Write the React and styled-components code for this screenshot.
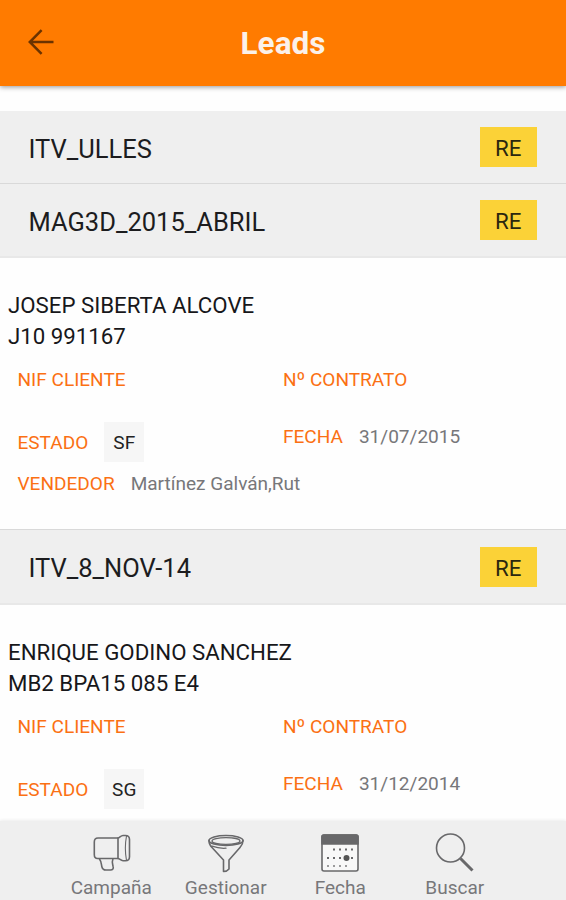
import React from "react";
import styled, { createGlobalStyle } from "styled-components";

const GlobalStyle = createGlobalStyle`
  *, *::before, *::after { box-sizing: border-box; }
  html, body { margin: 0; padding: 0; background: #fff; overflow: hidden; }
  body { font-family: Roboto, "Noto Sans", sans-serif; color: #1c1c1e; }
`;

const Screen = styled.div`
  width: 566px;
  height: 900px;
  display: flex;
  flex-direction: column;
  background: #fefefe;
  overflow: hidden;
`;

const Header = styled.header`
  flex: none;
  height: 85.5px;
  display: grid;
  grid-template-columns: 83px 1fr 83px;
  align-items: center;
  background: #ff7b00;
  box-shadow: 0 1px 5px rgba(0, 0, 0, 0.42);
`;

const BackButton = styled.button`
  display: flex;
  justify-content: center;
  padding: 0;
  margin: 0 1px 2px 0;
  border: 0;
  background: none;
  color: #6b3300;
`;

const Title = styled.h1`
  margin: 0;
  padding-top: 2px;
  text-align: center;
  font-size: 31.5px;
  line-height: 36px;
  font-weight: 700;
  color: #fbf1ea;
`;

const List = styled.main`
  flex: 1;
  min-height: 0;
  padding-top: 25.5px;
  overflow: hidden;
`;

const CampaignRow = styled.div`
  height: ${(p) => p.$height}px;
  display: flex;
  align-items: center;
  justify-content: space-between;
  padding: 0 29px 0 28.5px;
  background: #efefef;
  border-top: ${(p) => (p.$divided ? "1px solid #d9d9d9" : "0")};
  border-bottom: ${(p) => (p.$last ? "2px solid #e8e8e8" : "0")};
`;

const CampaignName = styled.span`
  padding-top: 3px;
  font-size: 25.5px;
  line-height: 30px;
`;

const Badge = styled.span`
  width: 57.5px;
  height: 40px;
  display: flex;
  align-items: center;
  justify-content: center;
  padding-top: 2px;
  background: #fbd237;
  font-size: 22.3px;
  color: #2b270f;
`;

const Detail = styled.section`
  height: 271px;
  padding: 32px 0 0 8px;
`;

const Heading = styled.div`
  font-size: 22.25px;
  line-height: 30.5px;
  color: #17171a;
`;

const Fields = styled.div`
  display: grid;
  grid-template-columns: 265.5px 1fr;
  padding: 15px 0 0 9.5px;
`;

const Column = styled.div`
  display: flex;
  flex-direction: column;
`;

const Field = styled.div`
  display: flex;
  align-items: center;
  height: ${(p) => p.$height}px;
  margin-top: ${(p) => p.$gap || 0}px;
  gap: 16px;
  white-space: nowrap;
  font-size: 19.05px;
`;

const Label = styled.span`
  padding-top: ${(p) => (p.$lowered ? 1 : 0)}px;
  color: #fb7013;
`;

const Value = styled.span`
  color: #77777a;
`;

const StateChip = styled.span`
  width: 40px;
  height: 40px;
  display: flex;
  align-items: center;
  justify-content: center;
  padding-top: 1px;
  background: #f6f6f6;
  color: #222;
`;

const TabBar = styled.nav`
  flex: none;
  height: 79px;
  display: grid;
  grid-template-columns: repeat(4, 114.5px);
  justify-content: center;
  background: #efefef;
  box-shadow: 0 -1px 3px rgba(0, 0, 0, 0.07);
`;

const Tab = styled.button`
  display: flex;
  flex-direction: column;
  align-items: center;
  padding: 12px 0 0;
  border: 0;
  background: none;
  font-family: inherit;
  font-size: 19px;
  line-height: 22px;
  color: #77777a;
`;

const TabIcon = styled.svg`
  display: block;
  flex: none;
  width: 40px;
  height: 40px;
  margin-bottom: 4px;
  fill: none;
  stroke: #68686a;
  stroke-width: 1.6;
  stroke-linecap: round;
  stroke-linejoin: round;
`;

const BackArrow = () => (
  <svg width="28" height="28" viewBox="0 0 28 28" fill="none" stroke="currentColor" strokeWidth="2.5">
    <path d="M26.5 14H3M14.6 2.2 2.8 14l11.8 11.8" />
  </svg>
);

const Megaphone = () => (
  <TabIcon viewBox="0 0 40 40">
    <path d="M27 5H7Q3.300 5 3.300 9v12.500Q3.300 25.500 6.500 25.500H27" />
    <path d="M27 5v20.500c1.500 0 2.800 2.200 5 2.200h2.500q4 0 4-4V6.500q0-4-4-4H32C29.800 2.500 28.500 5 27 5Z" />
    <path d="M35.500 3q-2.300 12 0 24.500" strokeWidth="1.100" />
    <path d="M8.500 26c1.800 2.500 1.700 4.500 2.300 7.500.5 2.500 2 3.500 4.200 3.500h4.500c2.300 0 3.200-1.500 2.600-3.500-.5-2.300-1.500-4.500-.2-7.500" />
  </TabIcon>
);

const Funnel = () => (
  <TabIcon viewBox="0 0 40 40">
    <ellipse cx="20" cy="7.500" rx="17" ry="5" />
    <ellipse cx="20" cy="8" rx="14" ry="3.300" strokeWidth="1.200" />
    <path d="M3 7.500c0 3 1 5 3 7L17.500 27v11.500q3.500 0 5.500-2.500V27l11-12.500c2-2.200 3-4 3-7" />
    <path d="M6 13.200q7 2.500 14 2" strokeWidth="1.300" />
  </TabIcon>
);

const Calendar = () => (
  <TabIcon viewBox="0 0 40 40">
    <rect x="2" y="2" width="36" height="36" rx="2" fill="#f8f8f8" />
    <path d="M2 11V4q0-2 2-2h32q2 0 2 2v7Z" fill="#68686a" />
    <g strokeWidth="2" strokeLinecap="butt" strokeDasharray="2 4">
      <path d="M13 16.500h21" />
      <path d="M7 25h28" />
      <path d="M7 33h20" strokeOpacity=".65" />
    </g>
    <circle cx="26.500" cy="25" r="3" fill="#555" stroke="none" />
  </TabIcon>
);

const Search = () => (
  <TabIcon viewBox="0 0 40 40">
    <circle cx="15.500" cy="15" r="14" />
    <path d="m25.500 25.500 12 12" strokeWidth="3" strokeLinecap="butt" />
  </TabIcon>
);

const tabs = [
  { name: "Campaña", Icon: Megaphone },
  { name: "Gestionar", Icon: Funnel },
  { name: "Fecha", Icon: Calendar },
  { name: "Buscar", Icon: Search },
];

function Campaign({ name, ...rest }) {
  return (
    <CampaignRow {...rest}>
      <CampaignName>{name}</CampaignName>
      <Badge>RE</Badge>
    </CampaignRow>
  );
}

function LeadDetail({ client, reference, state, date, seller }) {
  return (
    <Detail>
      <Heading>{client}</Heading>
      <Heading>{reference}</Heading>
      <Fields>
        <Column>
          <Field $height={26}><Label>NIF CLIENTE</Label></Field>
          <Field $height={40} $gap={29.5}>
            <Label $lowered>ESTADO</Label>
            <StateChip>{state}</StateChip>
          </Field>
          {seller && (
            <Field $height={26} $gap={8.5}>
              <Label>VENDEDOR</Label>
              <Value>{seller}</Value>
            </Field>
          )}
        </Column>
        <Column>
          <Field $height={26}><Label>Nº CONTRATO</Label></Field>
          <Field $height={26} $gap={31}>
            <Label>FECHA</Label>
            <Value>{date}</Value>
          </Field>
        </Column>
      </Fields>
    </Detail>
  );
}

export default function App() {
  return (
    <>
      <GlobalStyle />
      <Screen>
        <Header>
          <BackButton aria-label="Volver"><BackArrow /></BackButton>
          <Title>Leads</Title>
        </Header>
        <List>
          <Campaign name="ITV_ULLES" $height={72.4} />
          <Campaign name="MAG3D_2015_ABRIL" $height={75.1} $divided $last />
          <LeadDetail
            client="JOSEP SIBERTA ALCOVE"
            reference="J10 991167"
            state="SF"
            date="31/07/2015"
            seller="Martínez Galván,Rut"
          />
          <Campaign name="ITV_8_NOV-14" $height={76} $divided $last />
          <LeadDetail
            client="ENRIQUE GODINO SANCHEZ"
            reference="MB2 BPA15 085 E4"
            state="SG"
            date="31/12/2014"
          />
        </List>
        <TabBar>
          {tabs.map(({ name, Icon }) => (
            <Tab key={name}>
              <Icon />
              {name}
            </Tab>
          ))}
        </TabBar>
      </Screen>
    </>
  );
}
